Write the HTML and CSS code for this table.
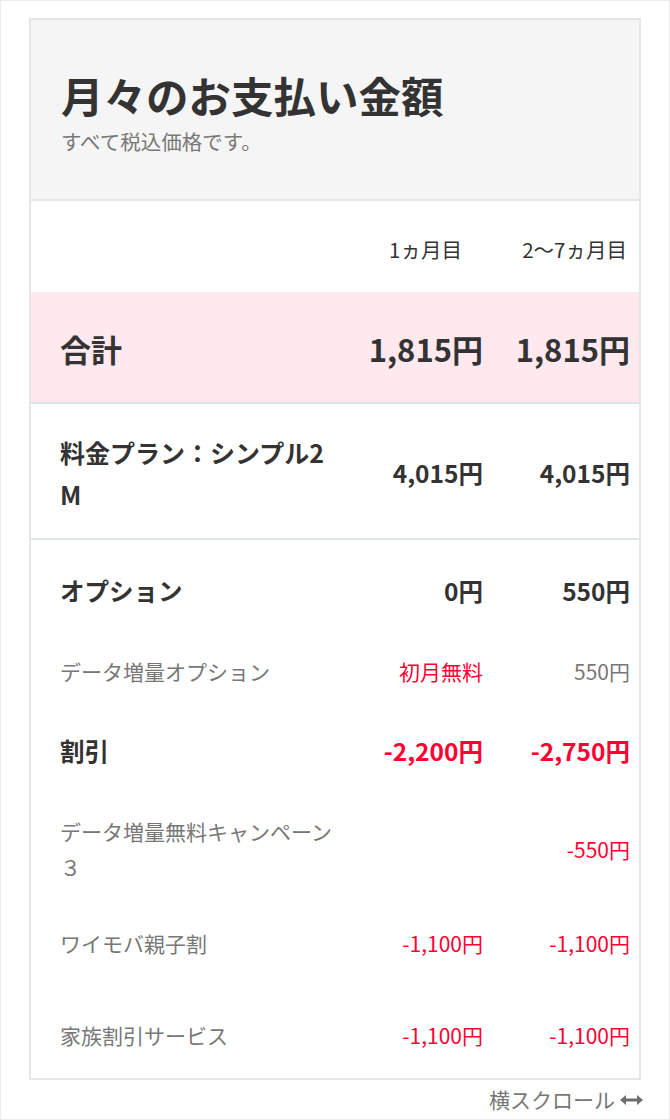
FILE: index.html
```html
<!DOCTYPE html>
<html lang="ja">
<head>
<meta charset="utf-8">
<title>月々のお支払い金額</title>
<link rel="stylesheet" href="styles.css">
</head>
<body>
<div class="frame">
  <div class="card">
    <div class="card-head">
      <h1 class="title">月々のお支払い金額</h1>
      <p class="note">すべて税込価格です。</p>
    </div>
    <div class="row row-cols">
      <div class="label"></div>
      <div class="val col1-head">1ヵ月目</div>
      <div class="val col2-head">2〜7ヵ月目</div>
    </div>
    <div class="row row-total">
      <div class="label">合計</div>
      <div class="val">1,815円</div>
      <div class="val">1,815円</div>
    </div>
    <div class="row row-plan">
      <div class="label">料金プラン：シンプル2M</div>
      <div class="val">4,015円</div>
      <div class="val">4,015円</div>
    </div>
    <div class="section">
      <div class="row row-main">
        <div class="label">オプション</div>
        <div class="val">0円</div>
        <div class="val">550円</div>
      </div>
      <div class="row row-sub">
        <div class="label">データ増量オプション</div>
        <div class="val red">初月無料</div>
        <div class="val">550円</div>
      </div>
      <div class="row row-main">
        <div class="label">割引</div>
        <div class="val red">-2,200円</div>
        <div class="val red">-2,750円</div>
      </div>
      <div class="row row-sub">
        <div class="label">データ増量無料キャンペーン３</div>
        <div class="val red"></div>
        <div class="val red">-550円</div>
      </div>
      <div class="row row-sub row-oyako">
        <div class="label">ワイモバ親子割</div>
        <div class="val red">-1,100円</div>
        <div class="val red">-1,100円</div>
      </div>
      <div class="row row-sub row-family">
        <div class="label">家族割引サービス</div>
        <div class="val red">-1,100円</div>
        <div class="val red">-1,100円</div>
      </div>
    </div>
  </div>
  <div class="scroll-hint">横スクロール<svg class="arrow" width="23" height="10" viewBox="0 0 23 10" aria-hidden="true"><path d="M0 5 L6 0 L6 3.5 L17 3.5 L17 0 L23 5 L17 10 L17 6.5 L6 6.5 L6 10 Z" fill="#6e6e6e"/></svg></div>
</div>
</body>
</html>
```

FILE: styles.css
```css
* { box-sizing: border-box; }
html, body { margin: 0; padding: 0; background: #fff; }
body {
  font-family: "Noto Sans CJK JP", "Noto Sans", sans-serif;
  color: #333;
}
.frame {
  width: 670px;
  height: 1120px;
  border: 1px solid #ececec;
  padding: 17px 28px 0 28px;
}
.card {
  width: 612px;
  border: 2px solid #e6e6e6;
  background: #fff;
}
.card-head {
  background: #f5f5f5;
  border-bottom: 2px solid #e6e6e6;
  padding: 45px 30px 42px;
}
.title {
  margin: 0;
  font-size: 42.5px;
  line-height: 60px;
  font-weight: 700;
  color: #333;
}
.note {
  margin: 0;
  font-size: 20.5px;
  line-height: 32px;
  color: #777;
}
.row {
  display: grid;
  grid-template-columns: 275px 1fr 147px;
  align-items: center;
  padding: 0 9px 0 29px;
}
.label { text-align: left; }
.val { text-align: right; white-space: nowrap; }
.row-cols {
  font-size: 20.5px;
  line-height: 36px;
  padding-top: 30px;
  padding-bottom: 25px;
}
.col1-head { padding-right: 21px; }
.col2-head { padding-right: 3px; }
.row-total {
  background: #ffe8ee;
  font-size: 31px;
  font-weight: 700;
  line-height: 52px;
  padding-top: 31px;
  padding-bottom: 27px;
  border-bottom: 2px solid #dbe6ec;
}
.row-plan {
  font-size: 24.5px;
  font-weight: 700;
  line-height: 42px;
  padding-top: 27px;
  padding-bottom: 23px;
  border-bottom: 2px solid #dbe6ec;
}
.row-plan .label { font-size: 25px; word-break: break-all; }
.section { padding: 11px 0 0; }
.row-main {
  font-size: 24.5px;
  font-weight: 700;
  line-height: 36px;
  padding-top: 22px;
  padding-bottom: 22px;
}
.row-sub {
  font-size: 21px;
  line-height: 36px;
  color: #777;
  padding-top: 22px;
  padding-bottom: 22px;
}
.row-oyako { padding-top: 18px; padding-bottom: 26px; }
.row-family { padding-top: 30px; padding-bottom: 25px; }
.red { color: #ff0033; }
.scroll-hint {
  width: 614px;
  display: flex;
  justify-content: flex-end;
  align-items: center;
  gap: 5px;
  font-size: 21px;
  line-height: 36px;
  color: #777;
  margin-top: 1px;
}
.arrow { display: block; margin-top: 2px; }
```
